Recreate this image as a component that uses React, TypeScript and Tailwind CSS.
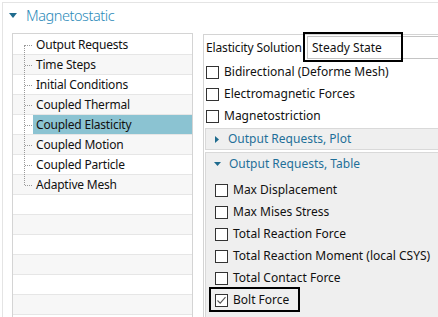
import React from 'react';

const treeItems = [
  'Output Requests',
  'Time Steps',
  'Initial Conditions',
  'Coupled Thermal',
  'Coupled Elasticity',
  'Coupled Motion',
  'Coupled Particle',
  'Adaptive Mesh',
];

const tableOutputs = [
  { label: 'Max Displacement', checked: false },
  { label: 'Max Mises Stress', checked: false },
  { label: 'Total Reaction Force', checked: false },
  { label: 'Total Reaction Moment (local CSYS)', checked: false },
  { label: 'Total Contact Force', checked: false },
  { label: 'Bolt Force', checked: true },
];

function CheckBox({ checked = false }: { checked?: boolean }) {
  return (
    <span className="w-[13px] h-[13px] shrink-0 border border-[#333333] bg-white flex items-center justify-center">
      {checked && (
        <svg width="11" height="11" viewBox="0 0 11 11">
          <polyline points="1.5,5.5 4.2,8.2 9.5,2.2" fill="none" stroke="#555555" strokeWidth="1.1" />
        </svg>
      )}
    </span>
  );
}

function TreeRow({ label, index, total }: { label: string; index: number; total: number }) {
  const selected = label === 'Coupled Elasticity';
  const first = index === 0;
  const last = index === total - 1;
  return (
    <div className={`h-[20px] flex border-b border-[#e6e6e6] ${index % 2 === 1 ? 'bg-[#f7f7f7]' : 'bg-white'}`}>
      <div className="relative w-[20px] shrink-0">
        <span
          className={`absolute left-[11px] border-l border-dotted border-[#9a9a9a] ${
            first ? 'top-[10px] bottom-[-1px]' : last ? 'top-[-1px] h-[11px]' : 'top-[-1px] bottom-[-1px]'
          }`}
        />
        <span className="absolute left-[12px] right-[1px] top-[10px] border-t border-dotted border-[#9a9a9a]" />
      </div>
      <div className={`flex-1 flex items-center pl-[3px] tracking-[-0.2px] ${selected ? 'bg-[#8bc3d2]' : ''}`}>
        {label}
      </div>
    </div>
  );
}

export default function App() {
  const emptyRows = Array.from({ length: 7 });

  return (
    <div
      className="w-[438px] h-[317px] overflow-hidden bg-white pl-[2px] pt-[2px] text-[12px] text-[#111111]"
      style={{ fontFamily: '"Noto Sans", "Open Sans", sans-serif' }}
    >
      <div className="h-full border-l border-t border-[#e4e4e4] flex flex-col">
        {/* header */}
        <div className="h-[30px] shrink-0 flex items-start pl-[6px] pt-[1px]">
          <div className="h-[22px] flex items-center gap-[9px]">
            <svg width="8" height="5" viewBox="0 0 8 5">
              <polygon points="0,0 8,0 4,5" fill="#1f6b8e" />
            </svg>
            <span className="text-[14.5px] leading-[22px] font-light tracking-[-0.45px] text-[#2b8ab9]">
              Magnetostatic
            </span>
          </div>
        </div>

        <div className="flex flex-1 min-h-0">
          {/* tree panel */}
          <div className="ml-[9px] w-[181px] shrink-0 border border-[#d4d4d4] pt-[1px] leading-[16px]">
            {treeItems.map((t, i) => (
              <TreeRow key={t} label={t} index={i} total={treeItems.length} />
            ))}
            {emptyRows.map((_, i) => (
              <div
                key={i}
                className={`h-[20px] border-b border-[#e6e6e6] ${(i + treeItems.length) % 2 === 1 ? 'bg-[#f7f7f7]' : 'bg-white'}`}
              />
            ))}
          </div>

          {/* settings panel */}
          <div className="relative ml-[10px] mt-[1px] flex-1 border-l border-t border-[#d4d4d4] flex flex-col">
            <div className="mt-[1px] h-[23px] flex items-center pl-[2px]">
              <span className="w-[101px] shrink-0 whitespace-nowrap tracking-[-0.15px]">Elasticity Solution</span>
              <div className="w-[140px] shrink-0 h-[23px] border border-[#c4c4c4] bg-white flex items-center pl-[4px]">
                Steady State
              </div>
            </div>
            <span className="absolute left-[99px] top-[-3px] w-[100px] h-[30px] border-2 border-black" />

            <div className="mt-[2px] pl-[2px]">
              {['Bidirectional (Deforme Mesh)', 'Electromagnetic Forces', 'Magnetostriction'].map((t) => (
                <div key={t} className="h-[22px] flex items-center gap-[5px]">
                  <CheckBox />
                  <span>{t}</span>
                </div>
              ))}
            </div>

            <div className="mt-[1px] ml-[1px] h-[22px] border-y border-l border-[#d9d9d9] bg-[#efefef] flex items-center pl-[9px] gap-[9px] text-[#1f6f99]">
              <svg width="4" height="7" viewBox="0 0 4 7">
                <polygon points="0,0 4,3.5 0,7" fill="#1f6b8e" />
              </svg>
              <span>Output Requests, Plot</span>
            </div>

            <div className="relative mt-[2px] ml-[1px] flex-1 border-t border-l border-[#d9d9d9] bg-[#efefef]">
              <div className="h-[22px] flex items-center pl-[8px] gap-[8px] text-[#1f6f99]">
                <svg width="7" height="4" viewBox="0 0 7 4">
                  <polygon points="0,0 7,0 3.5,4" fill="#1f6b8e" />
                </svg>
                <span>Output Requests, Table</span>
              </div>
              <div className="mt-[4px] pl-[9px]">
                {tableOutputs.map((o) => (
                  <div key={o.label} className="h-[22px] flex items-center gap-[5px]">
                    <CheckBox checked={o.checked} />
                    <span>{o.label}</span>
                  </div>
                ))}
              </div>
              <span className="absolute left-[3px] top-[134px] w-[91px] h-[25px] border-2 border-black" />
            </div>
          </div>
        </div>
      </div>
    </div>
  );
}
